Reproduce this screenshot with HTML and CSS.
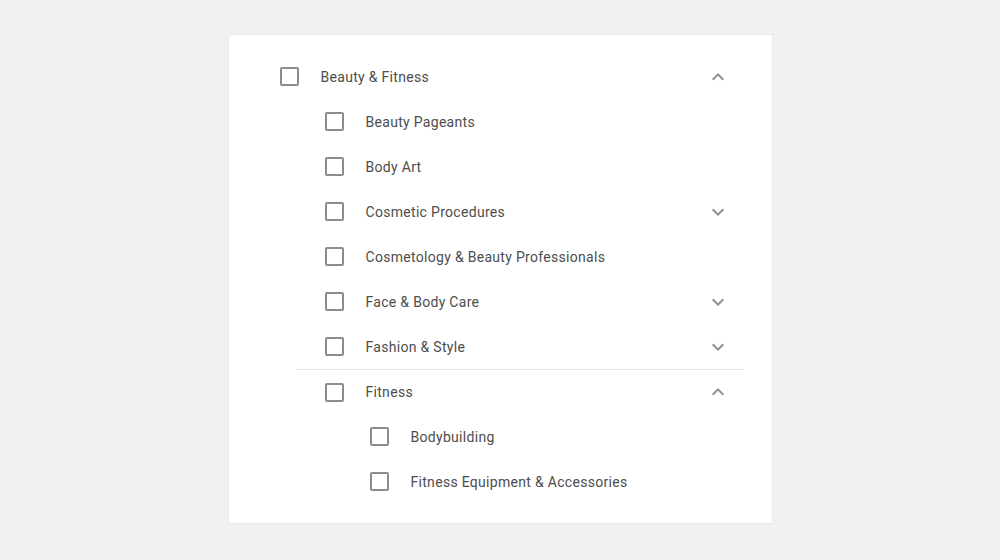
FILE: index.html
```html
<!DOCTYPE html>
<html lang="en">
<head>
    <meta charset="UTF-8">
    <title>Categories</title>
    <link rel="stylesheet" href="styles.css">
</head>
<body>
    <div class="card">
        <div class="row">
            <span class="box"></span>
            <span class="label">Beauty &amp; Fitness</span>
            <svg class="chev" viewBox="0 0 24 24"><path d="M12 8l-6 6 1.41 1.41L12 10.83l4.59 4.58L18 14z"/></svg>
        </div>
        <div class="group">
            <div class="row"><span class="box"></span><span class="label">Beauty Pageants</span></div>
            <div class="row"><span class="box"></span><span class="label">Body Art</span></div>
            <div class="row">
                <span class="box"></span><span class="label">Cosmetic Procedures</span>
                <svg class="chev" viewBox="0 0 24 24"><path d="M16.59 8.59L12 13.17 7.41 8.59 6 10l6 6 6-6z"/></svg>
            </div>
            <div class="row"><span class="box"></span><span class="label">Cosmetology &amp; Beauty Professionals</span></div>
            <div class="row">
                <span class="box"></span><span class="label">Face &amp; Body Care</span>
                <svg class="chev" viewBox="0 0 24 24"><path d="M16.59 8.59L12 13.17 7.41 8.59 6 10l6 6 6-6z"/></svg>
            </div>
            <div class="row">
                <span class="box"></span><span class="label">Fashion &amp; Style</span>
                <svg class="chev" viewBox="0 0 24 24"><path d="M16.59 8.59L12 13.17 7.41 8.59 6 10l6 6 6-6z"/></svg>
            </div>
            <div class="row divided">
                <span class="box"></span><span class="label">Fitness</span>
                <svg class="chev" viewBox="0 0 24 24"><path d="M12 8l-6 6 1.41 1.41L12 10.83l4.59 4.58L18 14z"/></svg>
            </div>
            <div class="group sub">
                <div class="row"><span class="box"></span><span class="label">Bodybuilding</span></div>
                <div class="row"><span class="box"></span><span class="label">Fitness Equipment &amp; Accessories</span></div>
            </div>
        </div>
    </div>
</body>
</html>
```

FILE: styles.css
```css
body {
    margin: 0;
    background-color: #f1f1f1;
    font-family: Roboto, "Liberation Sans", sans-serif;
}
.card {
    width: 545px;
    margin: 34px auto 0;
    padding: 19px 0 19px;
    background-color: #fff;
    box-sizing: border-box;
    border: 1px solid #ebebeb;
}
.row {
    display: flex;
    align-items: center;
    height: 45px;
    padding: 0 42px 0 51px;
    box-sizing: border-box;
}
.box {
    width: 19px;
    height: 19px;
    box-sizing: border-box;
    border: 2px solid #8c8c8c;
    border-radius: 2px;
    margin-right: 22px;
    flex-shrink: 0;
}
.label {
    flex: 1;
    font-size: 14px;
    color: #4d4d4d;
    letter-spacing: 0.3px;
}
.chev {
    width: 24px;
    height: 24px;
    fill: #8f8f8f;
}
.group {
    margin: 0 29px 0 67px;
}
.group .row {
    padding: 0 13px 0 29px;
}
.group.sub {
    margin: 0 0 0 45px;
}
.divided {
    border-top: 1px solid #e4e4e4;
}
```
